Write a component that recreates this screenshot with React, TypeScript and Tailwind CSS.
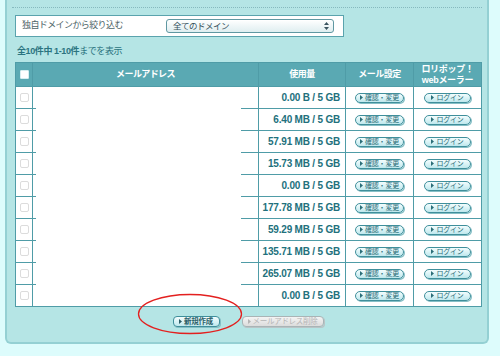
import React from 'react';

const USAGE = [
  '0.00 B / 5 GB',
  '6.40 MB / 5 GB',
  '57.91 MB / 5 GB',
  '15.73 MB / 5 GB',
  '0.00 B / 5 GB',
  '177.78 MB / 5 GB',
  '59.29 MB / 5 GB',
  '135.71 MB / 5 GB',
  '265.07 MB / 5 GB',
  '0.00 B / 5 GB',
];

function Arrow({ color = '#2b6e78' }: { color?: string }) {
  return (
    <svg width="3" height="5" viewBox="0 0 3 5" className="mr-[2px] shrink-0">
      <path d="M0 0 L3 2.5 L0 5 Z" fill={color} />
    </svg>
  );
}

function Pill({ label, w }: { label: string; w: string }) {
  return (
    <span
      className={`${w} inline-flex h-[10px] items-center justify-center rounded-full border border-[#3f8f9b] bg-linear-to-b from-[#f3fdfe] to-[#bfe8ed] text-[7px] leading-none tracking-[-0.2px] text-[#2b6e78] shadow-[1px_1px_0_#86bfc6]`}
    >
      <Arrow />
      {label}
    </span>
  );
}

export default function App() {
  return (
    <div className="relative h-[356px] w-[500px] overflow-hidden bg-[#ddfcfc] font-['Liberation_Sans','Noto_Sans_CJK_JP',sans-serif]">
      {/* パネル */}
      <div className="ml-[5px] flex h-[344px] w-[484px] flex-col rounded-b-[6px] border-x-2 border-b-2 border-[#94d0d3] bg-[#b5e5e5] px-[8px]">
        <div className="mx-[-3px] mt-[7px] border-t border-dotted border-[#86b9be]" />

        {/* 絞り込み */}
        <div className="mt-[7px] flex h-[22px] w-[329px] items-center border border-[#5aa3ad] bg-white pl-[6px] pr-[9px]">
          <span className="text-[9px] tracking-[-0.6px] text-[#4d6468]">独自ドメインから絞り込む</span>
          <div className="ml-auto flex h-[14px] w-[168px] items-center rounded-[3px] border border-[#5f98a2] bg-linear-to-b from-white to-[#dfeef0] pl-[6px] pr-[4px] shadow-[inset_0_1px_0_#fff]">
            <span className="text-[8.5px] tracking-[-0.5px] text-[#34505a]">全てのドメイン</span>
            <svg width="5" height="8" viewBox="0 0 5 8" className="ml-auto">
              <path d="M2.5 0 L5 3 L0 3 Z M2.5 8 L5 5 L0 5 Z" fill="#3b5560" />
            </svg>
          </div>
        </div>

        <div className="mt-[9px] flex h-[12px] items-center pl-[2px] text-[9px] tracking-[-0.4px] text-[#2b7480]">
          <span className="font-bold">全10件中 1-10件</span>
          <span>までを表示</span>
        </div>

        {/* 一覧 */}
        <div className="relative mt-[4px] grid w-[467px] grid-cols-[16px_225px_86px_67px_67px] grid-rows-[23px_repeat(10,21px)] gap-px border border-[#4f9ca7] bg-[#4f9ca7]">
          <div className="flex items-center justify-center bg-[#5aa9b3]">
            <span className="h-[9px] w-[9px] rounded-[1px] border border-[#d6eef0] bg-white" />
          </div>
          <div className="flex items-center justify-center bg-[#5aa9b3] text-[9px] font-bold tracking-[-0.6px] text-white">
            メールアドレス
          </div>
          <div className="flex items-center justify-center bg-[#5aa9b3] text-[9px] font-bold tracking-[-0.5px] text-white">
            使用量
          </div>
          <div className="flex items-center justify-center bg-[#5aa9b3] text-[9px] font-bold tracking-[-0.5px] text-white">
            メール設定
          </div>
          <div className="flex flex-col items-center justify-center bg-[#5aa9b3] text-[9px] font-bold leading-[11px] tracking-[-0.3px] text-white">
            <span>ロリポップ！</span>
            <span>webメーラー</span>
          </div>

          {USAGE.map((u, i) => (
            <React.Fragment key={i}>
              <div className="flex items-center justify-center bg-white">
                <span className="h-[9px] w-[9px] rounded-[2px] border border-[#dcdcdc] bg-white" />
              </div>
              <div className="bg-white" />
              <div className="flex items-center justify-end bg-white pr-[5px] text-[10px] font-bold tracking-[-0.2px] text-[#22707c]">
                {u}
              </div>
              <div className="flex items-center justify-center bg-white">
                <Pill label="確認・変更" w="w-[49px]" />
              </div>
              <div className="flex items-center justify-center bg-white">
                <Pill label="ログイン" w="w-[47px]" />
              </div>
            </React.Fragment>
          ))}

          {/* メールアドレス欄の目隠し */}
          <div className="absolute left-[20px] top-[24px] h-[219px] w-[205px] bg-white" />
        </div>

        {/* 操作ボタン */}
        <div className="mt-[9px] flex justify-center gap-[22px] pl-[2px]">
          <span className="inline-flex h-[11px] w-[47px] items-center justify-center rounded-[4px] border border-[#3f8f9b] bg-linear-to-b from-[#f3fdfe] to-[#bfe8ed] text-[7.5px] font-bold leading-none tracking-[-0.3px] text-[#2b5e68] shadow-[1px_1px_0_#86bfc6]">
            <Arrow color="#2b5e68" />
            新規作成
          </span>
          <span className="inline-flex h-[11px] w-[82px] items-center justify-center rounded-[4px] border border-[#a9b4b6] bg-linear-to-b from-[#f4f4f4] to-[#dcdcdc] text-[7.5px] leading-none tracking-[-0.3px] text-[#b5b5b5] shadow-[1px_1px_0_#b9c4c6]">
            <Arrow color="#b5b5b5" />
            メールアドレス削除
          </span>
        </div>
      </div>

      {/* 赤丸 */}
      <svg className="absolute left-[137px] top-[293px]" width="106" height="42" viewBox="0 0 106 42">
        <ellipse cx="53" cy="21" rx="51.5" ry="19.5" fill="none" stroke="#e3201f" strokeWidth="1.3" />
      </svg>
    </div>
  );
}
